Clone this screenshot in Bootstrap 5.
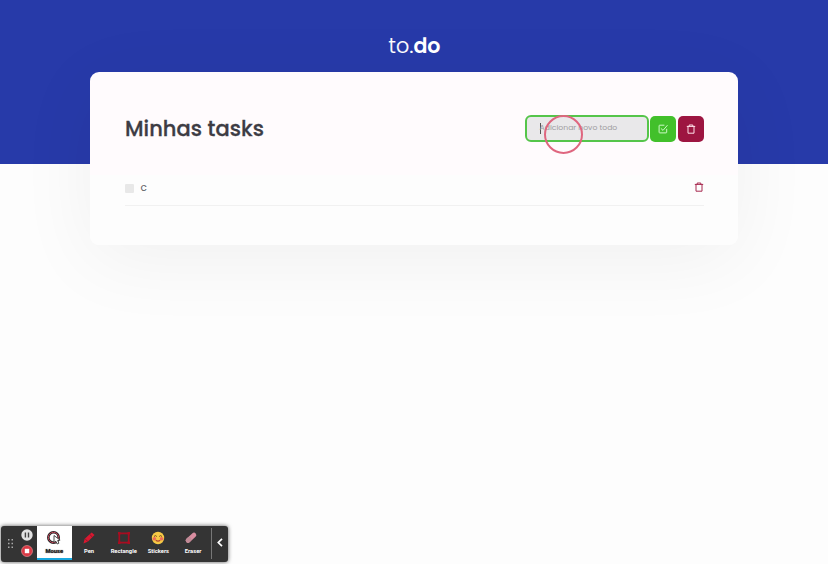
<!DOCTYPE html>
<html lang="pt-BR">
<head>
<meta charset="utf-8">
<meta name="viewport" content="width=device-width, initial-scale=1">
<title>to.do</title>
<link rel="stylesheet" href="https://cdn.jsdelivr.net/npm/bootstrap@5.3.0/dist/css/bootstrap.min.css">
<style>
body{font-family:Poppins,Inter,sans-serif;background:#fdfdfd;color:#3d3d4d;min-height:564px;overflow:hidden}
.hero{height:164px;background:#273aa9;padding-top:30px;color:#fff;font-size:20.6px;line-height:32px;text-indent:1px}
.hero span{font-weight:300;letter-spacing:.2px;-webkit-text-stroke:.2px #fff}
.hero b{font-weight:600}
.panel{width:648px;height:173px;margin-top:-92px;padding:43px 34px 0 35px;background:linear-gradient(#fffbfd 0 103px,#fdfdfd 103px);border-radius:9px;box-shadow:0 14px 80px rgba(0,0,0,.055)}
.panel h1{font-size:21px;line-height:27px;font-weight:500;letter-spacing:.05px;color:#3d3c44;-webkit-text-stroke:.3px #3d3c44}
.entry{width:124px;height:27px;border:2px solid #55c54a;border-radius:6px;background:#e9e8ea;padding:0 0 1px 13px;font-size:7.7px;color:#a09ea2;margin-right:1.5px}
.caret{width:1px;height:11px;background:#555;margin-right:-1px}
.act{width:26px;height:26px;border-radius:5px;border:0}
.act-ok{background:#42c02b;margin-right:2px}
.act-del{background:#9d1541}
.task{height:35px;border-bottom:1px solid #f1f1f1;margin-top:29px;font-size:10.5px;color:#626166}
.tick{width:9px;height:9px;background:#e8e8e8;border-radius:1px;margin-top:13px}
.task span{margin:9px 0 0 6.5px}
.task svg{margin-top:11px}
.ring{left:544px;top:115px;width:39px;height:39px;border:2px solid #df667f}
.recorder{left:1px;top:526px;width:227px;height:36px;background:#343434;border-radius:3px;box-shadow:0 0 4px rgba(0,0,0,.65);font:700 5.8px/8px Roboto,sans-serif;color:#fff}
.grip{width:19px}
.ctl{width:17px;gap:4px;padding-right:3px;padding-bottom:2px}
.tool{width:34.7px;padding-top:5px;gap:2px}
.tool-on{height:34px;background:#fff;color:#222;border-bottom:2px solid #17a8df}
.tool-on span{text-shadow:0 0 1px #222}
.sep{width:1px;height:31px;background:#777;margin-left:.5px;margin-top:2px}
svg{display:block;flex:none}
</style>
</head>
<body class="position-relative">
<header class="hero text-center"><span>to.</span><b>do</b></header>
<main class="panel mx-auto">
  <div class="d-flex align-items-center justify-content-between">
    <h1 class="m-0">Minhas tasks</h1>
    <div class="d-flex align-items-center">
      <div class="entry d-flex align-items-center"><i class="caret"></i><span>Adicionar novo todo</span></div>
      <button class="act act-ok p-0 d-flex align-items-center justify-content-center" aria-label="Adicionar">
        <svg width="10" height="10" viewBox="0 0 10 10" fill="none" stroke="#dcffd6" stroke-width=".9" stroke-linecap="round" stroke-linejoin="round"><path d="M6 1.2H1.7a.6.6 0 0 0-.6.6v6.5c0 .3.3.6.6.6h6.4c.4 0 .6-.3.6-.6V5.2M3.2 4.7 5 6.4l4.2-4.9"/></svg>
      </button>
      <button class="act act-del p-0 d-flex align-items-center justify-content-center" aria-label="Excluir">
        <svg width="10" height="10" viewBox="0 0 10 10" fill="none" stroke="#ffe0e9" stroke-width="1" stroke-linejoin="round" stroke-linecap="round"><path d="M1.2 2.4h7.6M3.2 2.3V1h3.6v1.3M2 2.6v6.6h6V2.6"/></svg>
      </button>
    </div>
  </div>
  <div class="task d-flex">
    <i class="tick"></i>
    <span>c</span>
    <svg class="ms-auto" width="10" height="10" viewBox="0 0 10 10" fill="none" stroke="#a72a50" stroke-width="1" stroke-linejoin="round" stroke-linecap="round"><path d="M1.2 2.4h7.6M3.2 2.3V1h3.6v1.3M2 2.6v6.6h6V2.6"/></svg>
  </div>
</main>
<div class="ring rounded-circle position-absolute"></div>
<div class="recorder position-absolute d-flex align-items-start text-center">
  <div class="grip h-100 d-flex align-items-center justify-content-center"><svg width="6" height="10" viewBox="0 0 6 10" fill="#aaa"><path d="M0 0h1.5v1.5H0zM3.5 0H5v1.5H3.5zM0 3.8h1.5v1.5H0zM3.5 3.8H5v1.5H3.5zM0 7.6h1.5v1.5H0zM3.5 7.6H5v1.5H3.5z"/></svg></div>
  <div class="ctl h-100 d-flex flex-column align-items-center justify-content-center">
    <svg width="12" height="12" viewBox="0 0 12 12"><circle cx="6" cy="6" r="5.7" fill="#e3e3e3"/><path d="M4.4 3.4v5.2M7.5 3.4v5.2" stroke="#444" stroke-width="1.4"/></svg>
    <svg width="12" height="12" viewBox="0 0 12 12"><circle cx="6" cy="6" r="5.5" fill="#da3944" stroke="#ef9a9f" stroke-width=".6"/><path d="M3.8 3.8h4.4v4.4H3.8z" fill="#fff"/></svg>
  </div>
  <div class="tool tool-on d-flex flex-column align-items-center">
    <svg width="16" height="14" viewBox="0 0 16 14"><circle cx="7.5" cy="6.5" r="5.2" fill="#fff" stroke="#222" stroke-width="2.6"/><circle cx="7.5" cy="6.5" r="5.2" fill="none" stroke="#c5485b" stroke-width="1"/><path d="M8 4.5v7l1.8-1.3 1.4 2.8 1.7-.8-1.2-2.7 2.4-.4z" fill="#fff" stroke="#222" stroke-width=".8"/></svg>
    <span>Mouse</span>
  </div>
  <div class="tool d-flex flex-column align-items-center">
    <svg width="14" height="14" viewBox="0 0 14 14"><path d="m1.5 12.5 1.2-4.7 7-6.4 2.8 2.7L6 10.600z" fill="#d91830"/><path d="m7.8 3.5 2.6 2.5M3.2 8l2.600 2.400" stroke="#79172b" stroke-width=".8"/></svg>
    <span>Pen</span>
  </div>
  <div class="tool d-flex flex-column align-items-center">
    <svg width="14" height="14" viewBox="0 0 14 14"><path d="M2.300 2.300h9.400v9.400H2.300z" fill="none" stroke="#a80c20" stroke-width="1.700"/><path d="M1 1h2.500v2.500H1zM10.500 1H13v2.500h-2.500zM1 10.500h2.500V13H1zM10.500 10.500H13V13h-2.500z" fill="#a80c20"/></svg>
    <span>Rectangle</span>
  </div>
  <div class="tool d-flex flex-column align-items-center">
    <svg width="14" height="14" viewBox="0 0 14 14"><circle cx="7" cy="7" r="6.200" fill="#f6c945"/><circle cx="3.400" cy="7.800" r="1.800" fill="#ef6d58"/><circle cx="10.600" cy="7.800" r="1.800" fill="#ef6d58"/><path d="M3 5.500q1.400-1.800 2.800 0M8.200 5.500q1.400-1.800 2.800 0" fill="none" stroke="#69401d" stroke-width=".9"/><path d="M4.800 9.200q2.200 1.800 4.400 0" fill="none" stroke="#b34431" stroke-width="1.200"/></svg>
    <span>Stickers</span>
  </div>
  <div class="tool d-flex flex-column align-items-center">
    <svg class="me-1" width="14" height="14" viewBox="0 0 14 14"><path d="m4 9.500 6-5.500" stroke="#d98da0" stroke-width="4.600" stroke-linecap="round"/><path d="m4 9.500 1.300-1.200" stroke="#c18a96" stroke-width="4.600" stroke-linecap="round"/></svg>
    <span>Eraser</span>
  </div>
  <i class="sep"></i>
  <div class="h-100 flex-grow-1 d-flex align-items-center justify-content-center pb-1"><svg width="6" height="9" viewBox="0 0 6 9" fill="none" stroke="#fff" stroke-width="1.700"><path d="M5 .8 1.300 4.500 5 8.200"/></svg></div>
</div>
<script src="https://cdn.jsdelivr.net/npm/bootstrap@5.3.0/dist/js/bootstrap.bundle.min.js"></script>
</body>
</html>
